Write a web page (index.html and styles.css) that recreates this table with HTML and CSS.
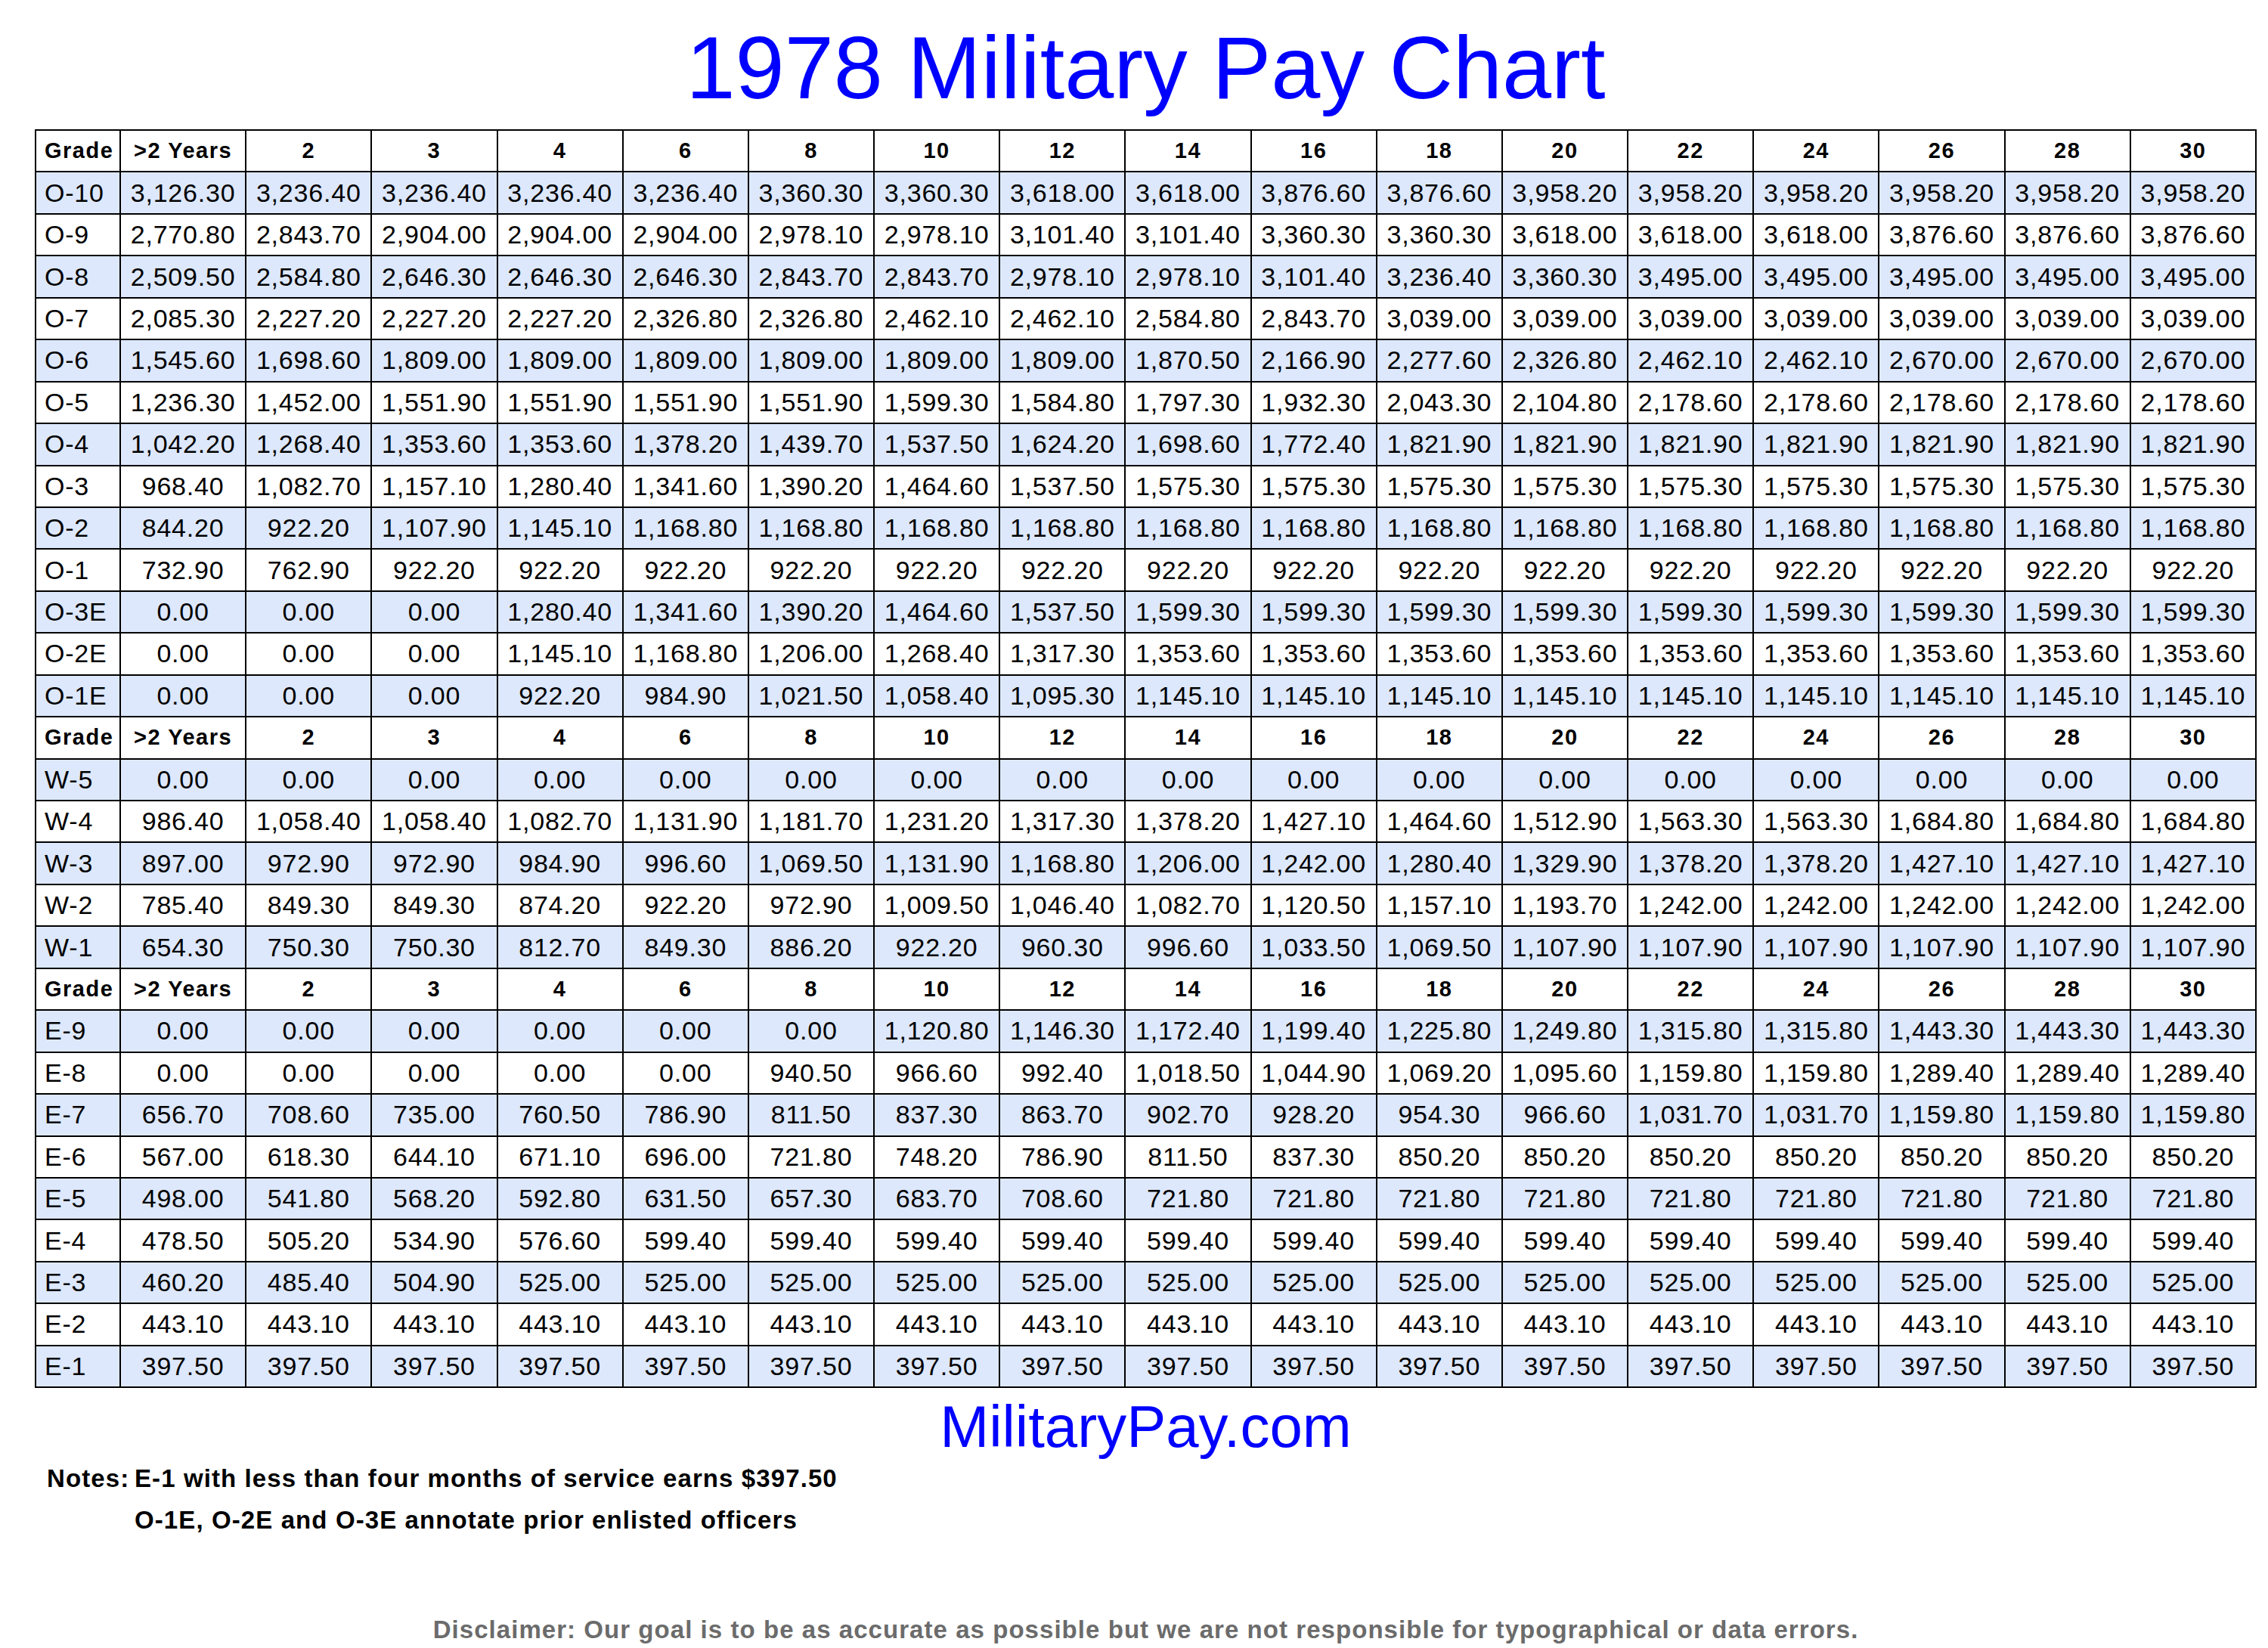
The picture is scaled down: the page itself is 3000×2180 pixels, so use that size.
FILE: index.html
```html
<!DOCTYPE html>
<html lang="en">
<head>
<meta charset="utf-8">
<title>1978 Military Pay Chart</title>
<link rel="stylesheet" href="styles.css">
</head>
<body>
<div class="page">
  <h1 class="title">1978 Military Pay Chart</h1>
  <table class="pay">
    <colgroup><col class="c-grade"><col span="17"></colgroup>
    <tbody>
      <tr class="hd"><td class="g">Grade</td><td>&gt;2 Years</td><td>2</td><td>3</td><td>4</td><td>6</td><td>8</td><td>10</td><td>12</td><td>14</td><td>16</td><td>18</td><td>20</td><td>22</td><td>24</td><td>26</td><td>28</td><td>30</td></tr>
      <tr class="b"><td class="g">O-10</td><td>3,126.30</td><td>3,236.40</td><td>3,236.40</td><td>3,236.40</td><td>3,236.40</td><td>3,360.30</td><td>3,360.30</td><td>3,618.00</td><td>3,618.00</td><td>3,876.60</td><td>3,876.60</td><td>3,958.20</td><td>3,958.20</td><td>3,958.20</td><td>3,958.20</td><td>3,958.20</td><td>3,958.20</td></tr>
      <tr><td class="g">O-9</td><td>2,770.80</td><td>2,843.70</td><td>2,904.00</td><td>2,904.00</td><td>2,904.00</td><td>2,978.10</td><td>2,978.10</td><td>3,101.40</td><td>3,101.40</td><td>3,360.30</td><td>3,360.30</td><td>3,618.00</td><td>3,618.00</td><td>3,618.00</td><td>3,876.60</td><td>3,876.60</td><td>3,876.60</td></tr>
      <tr class="b"><td class="g">O-8</td><td>2,509.50</td><td>2,584.80</td><td>2,646.30</td><td>2,646.30</td><td>2,646.30</td><td>2,843.70</td><td>2,843.70</td><td>2,978.10</td><td>2,978.10</td><td>3,101.40</td><td>3,236.40</td><td>3,360.30</td><td>3,495.00</td><td>3,495.00</td><td>3,495.00</td><td>3,495.00</td><td>3,495.00</td></tr>
      <tr><td class="g">O-7</td><td>2,085.30</td><td>2,227.20</td><td>2,227.20</td><td>2,227.20</td><td>2,326.80</td><td>2,326.80</td><td>2,462.10</td><td>2,462.10</td><td>2,584.80</td><td>2,843.70</td><td>3,039.00</td><td>3,039.00</td><td>3,039.00</td><td>3,039.00</td><td>3,039.00</td><td>3,039.00</td><td>3,039.00</td></tr>
      <tr class="b"><td class="g">O-6</td><td>1,545.60</td><td>1,698.60</td><td>1,809.00</td><td>1,809.00</td><td>1,809.00</td><td>1,809.00</td><td>1,809.00</td><td>1,809.00</td><td>1,870.50</td><td>2,166.90</td><td>2,277.60</td><td>2,326.80</td><td>2,462.10</td><td>2,462.10</td><td>2,670.00</td><td>2,670.00</td><td>2,670.00</td></tr>
      <tr><td class="g">O-5</td><td>1,236.30</td><td>1,452.00</td><td>1,551.90</td><td>1,551.90</td><td>1,551.90</td><td>1,551.90</td><td>1,599.30</td><td>1,584.80</td><td>1,797.30</td><td>1,932.30</td><td>2,043.30</td><td>2,104.80</td><td>2,178.60</td><td>2,178.60</td><td>2,178.60</td><td>2,178.60</td><td>2,178.60</td></tr>
      <tr class="b"><td class="g">O-4</td><td>1,042.20</td><td>1,268.40</td><td>1,353.60</td><td>1,353.60</td><td>1,378.20</td><td>1,439.70</td><td>1,537.50</td><td>1,624.20</td><td>1,698.60</td><td>1,772.40</td><td>1,821.90</td><td>1,821.90</td><td>1,821.90</td><td>1,821.90</td><td>1,821.90</td><td>1,821.90</td><td>1,821.90</td></tr>
      <tr><td class="g">O-3</td><td>968.40</td><td>1,082.70</td><td>1,157.10</td><td>1,280.40</td><td>1,341.60</td><td>1,390.20</td><td>1,464.60</td><td>1,537.50</td><td>1,575.30</td><td>1,575.30</td><td>1,575.30</td><td>1,575.30</td><td>1,575.30</td><td>1,575.30</td><td>1,575.30</td><td>1,575.30</td><td>1,575.30</td></tr>
      <tr class="b"><td class="g">O-2</td><td>844.20</td><td>922.20</td><td>1,107.90</td><td>1,145.10</td><td>1,168.80</td><td>1,168.80</td><td>1,168.80</td><td>1,168.80</td><td>1,168.80</td><td>1,168.80</td><td>1,168.80</td><td>1,168.80</td><td>1,168.80</td><td>1,168.80</td><td>1,168.80</td><td>1,168.80</td><td>1,168.80</td></tr>
      <tr><td class="g">O-1</td><td>732.90</td><td>762.90</td><td>922.20</td><td>922.20</td><td>922.20</td><td>922.20</td><td>922.20</td><td>922.20</td><td>922.20</td><td>922.20</td><td>922.20</td><td>922.20</td><td>922.20</td><td>922.20</td><td>922.20</td><td>922.20</td><td>922.20</td></tr>
      <tr class="b"><td class="g">O-3E</td><td>0.00</td><td>0.00</td><td>0.00</td><td>1,280.40</td><td>1,341.60</td><td>1,390.20</td><td>1,464.60</td><td>1,537.50</td><td>1,599.30</td><td>1,599.30</td><td>1,599.30</td><td>1,599.30</td><td>1,599.30</td><td>1,599.30</td><td>1,599.30</td><td>1,599.30</td><td>1,599.30</td></tr>
      <tr><td class="g">O-2E</td><td>0.00</td><td>0.00</td><td>0.00</td><td>1,145.10</td><td>1,168.80</td><td>1,206.00</td><td>1,268.40</td><td>1,317.30</td><td>1,353.60</td><td>1,353.60</td><td>1,353.60</td><td>1,353.60</td><td>1,353.60</td><td>1,353.60</td><td>1,353.60</td><td>1,353.60</td><td>1,353.60</td></tr>
      <tr class="b"><td class="g">O-1E</td><td>0.00</td><td>0.00</td><td>0.00</td><td>922.20</td><td>984.90</td><td>1,021.50</td><td>1,058.40</td><td>1,095.30</td><td>1,145.10</td><td>1,145.10</td><td>1,145.10</td><td>1,145.10</td><td>1,145.10</td><td>1,145.10</td><td>1,145.10</td><td>1,145.10</td><td>1,145.10</td></tr>
      <tr class="hd"><td class="g">Grade</td><td>&gt;2 Years</td><td>2</td><td>3</td><td>4</td><td>6</td><td>8</td><td>10</td><td>12</td><td>14</td><td>16</td><td>18</td><td>20</td><td>22</td><td>24</td><td>26</td><td>28</td><td>30</td></tr>
      <tr class="b"><td class="g">W-5</td><td>0.00</td><td>0.00</td><td>0.00</td><td>0.00</td><td>0.00</td><td>0.00</td><td>0.00</td><td>0.00</td><td>0.00</td><td>0.00</td><td>0.00</td><td>0.00</td><td>0.00</td><td>0.00</td><td>0.00</td><td>0.00</td><td>0.00</td></tr>
      <tr><td class="g">W-4</td><td>986.40</td><td>1,058.40</td><td>1,058.40</td><td>1,082.70</td><td>1,131.90</td><td>1,181.70</td><td>1,231.20</td><td>1,317.30</td><td>1,378.20</td><td>1,427.10</td><td>1,464.60</td><td>1,512.90</td><td>1,563.30</td><td>1,563.30</td><td>1,684.80</td><td>1,684.80</td><td>1,684.80</td></tr>
      <tr class="b"><td class="g">W-3</td><td>897.00</td><td>972.90</td><td>972.90</td><td>984.90</td><td>996.60</td><td>1,069.50</td><td>1,131.90</td><td>1,168.80</td><td>1,206.00</td><td>1,242.00</td><td>1,280.40</td><td>1,329.90</td><td>1,378.20</td><td>1,378.20</td><td>1,427.10</td><td>1,427.10</td><td>1,427.10</td></tr>
      <tr><td class="g">W-2</td><td>785.40</td><td>849.30</td><td>849.30</td><td>874.20</td><td>922.20</td><td>972.90</td><td>1,009.50</td><td>1,046.40</td><td>1,082.70</td><td>1,120.50</td><td>1,157.10</td><td>1,193.70</td><td>1,242.00</td><td>1,242.00</td><td>1,242.00</td><td>1,242.00</td><td>1,242.00</td></tr>
      <tr class="b"><td class="g">W-1</td><td>654.30</td><td>750.30</td><td>750.30</td><td>812.70</td><td>849.30</td><td>886.20</td><td>922.20</td><td>960.30</td><td>996.60</td><td>1,033.50</td><td>1,069.50</td><td>1,107.90</td><td>1,107.90</td><td>1,107.90</td><td>1,107.90</td><td>1,107.90</td><td>1,107.90</td></tr>
      <tr class="hd"><td class="g">Grade</td><td>&gt;2 Years</td><td>2</td><td>3</td><td>4</td><td>6</td><td>8</td><td>10</td><td>12</td><td>14</td><td>16</td><td>18</td><td>20</td><td>22</td><td>24</td><td>26</td><td>28</td><td>30</td></tr>
      <tr class="b"><td class="g">E-9</td><td>0.00</td><td>0.00</td><td>0.00</td><td>0.00</td><td>0.00</td><td>0.00</td><td>1,120.80</td><td>1,146.30</td><td>1,172.40</td><td>1,199.40</td><td>1,225.80</td><td>1,249.80</td><td>1,315.80</td><td>1,315.80</td><td>1,443.30</td><td>1,443.30</td><td>1,443.30</td></tr>
      <tr><td class="g">E-8</td><td>0.00</td><td>0.00</td><td>0.00</td><td>0.00</td><td>0.00</td><td>940.50</td><td>966.60</td><td>992.40</td><td>1,018.50</td><td>1,044.90</td><td>1,069.20</td><td>1,095.60</td><td>1,159.80</td><td>1,159.80</td><td>1,289.40</td><td>1,289.40</td><td>1,289.40</td></tr>
      <tr class="b"><td class="g">E-7</td><td>656.70</td><td>708.60</td><td>735.00</td><td>760.50</td><td>786.90</td><td>811.50</td><td>837.30</td><td>863.70</td><td>902.70</td><td>928.20</td><td>954.30</td><td>966.60</td><td>1,031.70</td><td>1,031.70</td><td>1,159.80</td><td>1,159.80</td><td>1,159.80</td></tr>
      <tr><td class="g">E-6</td><td>567.00</td><td>618.30</td><td>644.10</td><td>671.10</td><td>696.00</td><td>721.80</td><td>748.20</td><td>786.90</td><td>811.50</td><td>837.30</td><td>850.20</td><td>850.20</td><td>850.20</td><td>850.20</td><td>850.20</td><td>850.20</td><td>850.20</td></tr>
      <tr class="b"><td class="g">E-5</td><td>498.00</td><td>541.80</td><td>568.20</td><td>592.80</td><td>631.50</td><td>657.30</td><td>683.70</td><td>708.60</td><td>721.80</td><td>721.80</td><td>721.80</td><td>721.80</td><td>721.80</td><td>721.80</td><td>721.80</td><td>721.80</td><td>721.80</td></tr>
      <tr><td class="g">E-4</td><td>478.50</td><td>505.20</td><td>534.90</td><td>576.60</td><td>599.40</td><td>599.40</td><td>599.40</td><td>599.40</td><td>599.40</td><td>599.40</td><td>599.40</td><td>599.40</td><td>599.40</td><td>599.40</td><td>599.40</td><td>599.40</td><td>599.40</td></tr>
      <tr class="b"><td class="g">E-3</td><td>460.20</td><td>485.40</td><td>504.90</td><td>525.00</td><td>525.00</td><td>525.00</td><td>525.00</td><td>525.00</td><td>525.00</td><td>525.00</td><td>525.00</td><td>525.00</td><td>525.00</td><td>525.00</td><td>525.00</td><td>525.00</td><td>525.00</td></tr>
      <tr><td class="g">E-2</td><td>443.10</td><td>443.10</td><td>443.10</td><td>443.10</td><td>443.10</td><td>443.10</td><td>443.10</td><td>443.10</td><td>443.10</td><td>443.10</td><td>443.10</td><td>443.10</td><td>443.10</td><td>443.10</td><td>443.10</td><td>443.10</td><td>443.10</td></tr>
      <tr class="b"><td class="g">E-1</td><td>397.50</td><td>397.50</td><td>397.50</td><td>397.50</td><td>397.50</td><td>397.50</td><td>397.50</td><td>397.50</td><td>397.50</td><td>397.50</td><td>397.50</td><td>397.50</td><td>397.50</td><td>397.50</td><td>397.50</td><td>397.50</td><td>397.50</td></tr>
    </tbody>
  </table>
  <div class="site">MilitaryPay.com</div>
  <div class="notes">
    <div class="notes-label">Notes:</div>
    <div class="notes-lines">
      <div>E-1 with less than four months of service earns $397.50</div>
      <div>O-1E, O-2E and O-3E annotate prior enlisted officers</div>
    </div>
  </div>
  <div class="disclaimer">Disclaimer: Our goal is to be as accurate as possible but we are not responsible for typographical or data errors.</div>
</div>
</body>
</html>
```

FILE: styles.css
```css
html, body {
  margin: 0;
  padding: 0;
  background: #ffffff;
}

body {
  font-family: "Liberation Sans", Arial, Helvetica, sans-serif;
  color: #000000;
}

.page {
  width: 2939px;
  margin-left: 46px;
}

.title {
  margin: 0 0 15px 0;
  padding-top: 23px;
  font-size: 117px;
  line-height: 133px;
  font-weight: normal;
  color: #0000ff;
  text-align: center;
}

.pay {
  width: 2939px;
  table-layout: fixed;
  border-collapse: collapse;
  border: 2px solid #000000;
}

.c-grade {
  width: 112px;
}

.pay tr {
  height: 55.45px;
}

.pay td {
  border: 2px solid #000000;
  padding: 0;
  text-align: center;
  vertical-align: middle;
  font-size: 34px;
  letter-spacing: 0.8px;
  white-space: nowrap;
  background: #ffffff;
}

.pay td.g {
  text-align: left;
  padding-left: 11px;
}

.pay tr.b td {
  background: #dde8fc;
}

.pay tr.hd td {
  font-weight: bold;
  font-size: 29px;
  letter-spacing: 1.5px;
}

.site {
  margin-top: 7px;
  text-align: center;
  font-size: 78px;
  line-height: 88px;
  color: #0000ff;
}

.notes {
  display: flex;
  margin-top: -3px;
  padding-left: 16px;
  font-weight: bold;
  font-size: 33px;
  line-height: 55px;
  letter-spacing: 1.1px;
}

.notes-label {
  width: 116px;
  flex: none;
}

.disclaimer {
  margin-top: 98px;
  text-align: center;
  font-weight: bold;
  font-size: 33px;
  line-height: 40px;
  letter-spacing: 1.05px;
  color: #6b6b6b;
}
```
